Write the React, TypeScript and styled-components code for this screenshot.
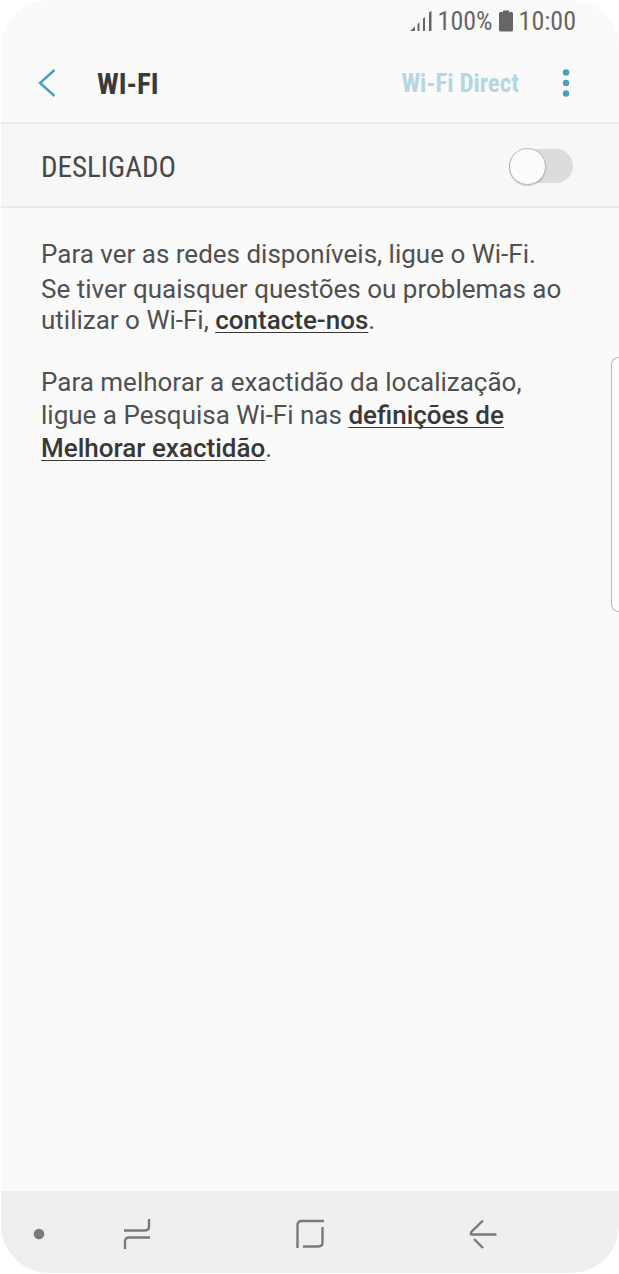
import React, { useState } from "react";
import styled, { createGlobalStyle } from "styled-components";

const GlobalStyle = createGlobalStyle`
  *, *::before, *::after { box-sizing: border-box; }
  body {
    margin: 0;
    background: #ffffff;
    font-family: Roboto, "Liberation Sans", sans-serif;
  }
`;

const condensed = `"Roboto Condensed", Roboto, "Liberation Sans", sans-serif`;

const Screen = styled.div`
  position: relative;
  display: flex;
  flex-direction: column;
  min-height: calc(100vh - 1px);
  margin: 0 0 1px 1px;
  overflow: hidden;
  border-radius: 48px;
  background: #fafafa;
  color: #505050;
`;

const StatusBar = styled.div`
  display: flex;
  justify-content: flex-end;
  align-items: center;
  gap: 6px;
  height: 42px;
  padding: 0 43px 0 0;
  font: 400 26px/30px ${condensed};
  color: #666666;
`;

const Header = styled.header`
  display: flex;
  align-items: center;
  height: 82px;
  padding: 2px 37px 0 30px;
  border-bottom: 2px solid #eaeaea;
`;

const IconButton = styled.button`
  display: flex;
  align-items: center;
  justify-content: center;
  width: 32px;
  height: 48px;
  padding: 0;
  border: 0;
  background: none;
  color: #4a9fc0;
`;

const Title = styled.h1`
  flex: 1;
  margin: 0 0 0 34px;
  padding-top: 2px;
  font: 700 29px/36px ${condensed};
  color: #3a3a3a;
`;

const DirectButton = styled.button`
  padding: 2px 0 0;
  margin-right: 31px;
  border: 0;
  background: none;
  font: 700 25px/32px ${condensed};
  color: #b5d7e4;
`;

const ToggleRow = styled.label`
  display: flex;
  align-items: center;
  justify-content: space-between;
  height: 84px;
  padding: 2px 46px 0 40px;
  border-bottom: 2px solid #eaeaea;
  background: #f7f7f7;
  font: 400 29px/36px ${condensed};
  color: #484848;
`;

const ToggleText = styled.span`
  padding-top: 2px;
`;

const Switch = styled.input`
  appearance: none;
  display: flex;
  align-items: center;
  justify-content: ${(p) => (p.checked ? "flex-end" : "flex-start")};
  width: 64px;
  height: 34px;
  margin: 0;
  border-radius: 17px;
  background: ${(p) => (p.checked ? "#8cc6dc" : "#dcdcdc")};

  &::before {
    content: "";
    flex: none;
    width: 37px;
    height: 37px;
    border: 1px solid #b8b8b8;
    border-radius: 50%;
    background: #fcfcfc;
    box-shadow: 0 1px 1px rgba(0, 0, 0, 0.2);
  }
`;

const Content = styled.main`
  flex: 1;
  padding: 30px 56px 40px 40px;
  font-size: 26px;
`;

const Lead = styled.p`
  margin: 0 0 4px;
  line-height: 32px;
`;

const Help = styled.p`
  margin: 0 0 30px;
  line-height: 31px;
`;

const Note = styled.p`
  margin: 0;
  line-height: 33px;
`;

const TextLink = styled.a`
  font-weight: 500;
  color: #383838;
  text-decoration: underline;
  text-decoration-thickness: 1px;
  text-decoration-skip-ink: none;
  text-underline-offset: 3px;
`;

const EdgePanel = styled.div`
  position: absolute;
  top: 357px;
  right: 0;
  width: 8px;
  height: 255px;
  border: 1px solid #bcbcbc;
  border-right: 0;
  border-radius: 10px 0 0 10px;
  background: #fdfdfd;
`;

const NavBar = styled.nav`
  display: grid;
  grid-template-columns: 22px 1fr 1fr 1fr;
  align-items: center;
  height: 82px;
  padding: 3px 49px 0 27px;
  background: #efefef;
`;

const NavButton = styled.button`
  display: flex;
  align-items: center;
  justify-content: center;
  height: 60px;
  padding: 0;
  border: 0;
  background: none;
  color: #7a7a7a;
`;

const stroke = { fill: "none", stroke: "currentColor", strokeWidth: 2.4 };

export default function App() {
  const [on, setOn] = useState(false);
  return (
    <>
      <GlobalStyle />
      <Screen>
        <StatusBar>
          <svg width="22" height="22" viewBox="0 0 22 22" fill="currentColor" aria-hidden="true">
            <path d="M0 21L5 16.500V21Z M7.500 14L9.500 12.500V21H7.500Z M13 8.500L15 7V21H13Z M19 2.500L21.500 1V21H19Z" />
          </svg>
          <span>100%</span>
          <svg width="14" height="22" viewBox="0 0 14 22" fill="currentColor" aria-hidden="true">
            <path d="M4 0.500H10V2H12.500Q14 2 14 3.500V20Q14 21.500 12.500 21.500H1.500Q0 21.500 0 20V3.500Q0 2 1.500 2H4Z" />
          </svg>
          <span>10:00</span>
        </StatusBar>
        <Header>
          <IconButton aria-label="Voltar">
            <svg width="18" height="28" viewBox="0 0 18 28" {...stroke}>
              <path d="M16.500 1L2 14L16.500 27" />
            </svg>
          </IconButton>
          <Title>WI-FI</Title>
          <DirectButton>Wi-Fi Direct</DirectButton>
          <IconButton aria-label="Mais opções">
            <svg width="8" height="28" viewBox="0 0 8 28" fill="currentColor">
              <circle cx="4" cy="3.500" r="3.200" />
              <circle cx="4" cy="14" r="3.200" />
              <circle cx="4" cy="24.500" r="3.200" />
            </svg>
          </IconButton>
        </Header>
        <ToggleRow>
          <ToggleText>{on ? "LIGADO" : "DESLIGADO"}</ToggleText>
          <Switch type="checkbox" role="switch" checked={on} onChange={(e) => setOn(e.target.checked)} />
        </ToggleRow>
        <Content>
          <Lead>Para ver as redes disponíveis, ligue o Wi-Fi.</Lead>
          <Help>
            Se tiver quaisquer questões ou problemas ao utilizar o Wi-Fi, <TextLink href="#contacto">contacte-nos</TextLink>.
          </Help>
          <Note>
            Para melhorar a exactidão da localização, ligue a Pesquisa Wi-Fi nas{" "}
            <TextLink href="#exactidao">definições de Melhorar exactidão</TextLink>.
          </Note>
        </Content>
        <EdgePanel />
        <NavBar>
          <NavButton aria-label="Mostrar barra">
            <svg width="12" height="12" viewBox="0 0 12 12" fill="currentColor">
              <circle cx="6" cy="6" r="5.300" />
            </svg>
          </NavButton>
          <NavButton aria-label="Recentes">
            <svg width="28" height="32" viewBox="0 0 28 32" {...stroke}>
              <path d="M1 12.500H22Q26 12.500 26 8.500V1 M27 19.500H6Q2 19.500 2 23.500V31" />
            </svg>
          </NavButton>
          <NavButton aria-label="Início">
            <svg width="28" height="30" viewBox="0 0 28 30" {...stroke}>
              <path d="M1.500 29V6Q1.500 2 5.500 2H28 M26.500 8V23.500Q26.500 27.500 22.500 27.500H7" />
            </svg>
          </NavButton>
          <NavButton aria-label="Anterior">
            <svg width="28" height="30" viewBox="0 0 28 30" {...stroke}>
              <path d="M14 1.500L2.300 13Q1 15.500 3 15.500H27.500 M5 20L14 29" />
            </svg>
          </NavButton>
        </NavBar>
      </Screen>
    </>
  );
}
